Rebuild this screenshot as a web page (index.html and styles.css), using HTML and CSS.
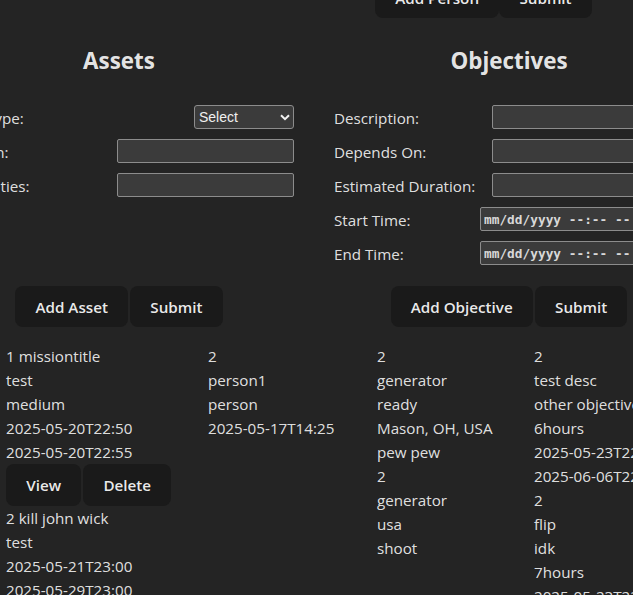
FILE: index.html
```html
<!DOCTYPE html>
<html lang="en">
<head>
<meta charset="utf-8">
<title>Mission Planner</title>
<link rel="stylesheet" href="styles.css">
</head>
<body>
<div class="page">
  <div class="top-actions">
    <button class="btn">Add Person</button><button class="btn">Submit</button>
  </div>

  <div class="forms">
    <section class="card">
      <h2 class="card-title">Assets</h2>
      <div class="fields">
        <div class="field">
          <label class="field-label">Asset Type:</label>
          <span class="select-wrap">
            <select class="select"><option>Select</option></select>
            <svg class="chevron" width="10" height="7" viewBox="0 0 10 7"><path d="M1 1.2 L5 5.2 L9 1.2" fill="none" stroke="#f2f2f2" stroke-width="2"/></svg>
          </span>
        </div>
        <div class="field">
          <label class="field-label">Location:</label>
          <input class="input input-asset" type="text">
        </div>
        <div class="field">
          <label class="field-label">Capabilities:</label>
          <input class="input input-asset" type="text">
        </div>
      </div>
      <div class="actions">
        <button class="btn">Add Asset</button><button class="btn">Submit</button>
      </div>
    </section>

    <section class="card">
      <h2 class="card-title">Objectives</h2>
      <div class="fields">
        <div class="field">
          <label class="field-label">Description:</label>
          <input class="input input-objective" type="text">
        </div>
        <div class="field">
          <label class="field-label">Depends On:</label>
          <input class="input input-objective" type="text">
        </div>
        <div class="field">
          <label class="field-label">Estimated Duration:</label>
          <input class="input input-objective" type="text">
        </div>
        <div class="field">
          <label class="field-label">Start Time:</label>
          <input class="input input-datetime" type="text" value="mm/dd/yyyy --:-- --" readonly>
        </div>
        <div class="field">
          <label class="field-label">End Time:</label>
          <input class="input input-datetime" type="text" value="mm/dd/yyyy --:-- --" readonly>
        </div>
      </div>
      <div class="actions">
        <button class="btn">Add Objective</button><button class="btn">Submit</button>
      </div>
    </section>
  </div>

  <div class="lists">
    <div class="list">
      <div class="item">
        <p>1 missiontitle</p>
        <p>test</p>
        <p>medium</p>
        <p>2025-05-20T22:50</p>
        <p>2025-05-20T22:55</p>
        <div class="item-actions"><button class="btn">View</button><button class="btn">Delete</button></div>
      </div>
      <div class="item">
        <p>2 kill john wick</p>
        <p>test</p>
        <p>2025-05-21T23:00</p>
        <p>2025-05-29T23:00</p>
      </div>
    </div>
    <div class="list">
      <div class="item">
        <p>2</p>
        <p>person1</p>
        <p>person</p>
        <p>2025-05-17T14:25</p>
      </div>
    </div>
    <div class="list">
      <div class="item">
        <p>2</p>
        <p>generator</p>
        <p>ready</p>
        <p>Mason, OH, USA</p>
        <p>pew pew</p>
      </div>
      <div class="item">
        <p>2</p>
        <p>generator</p>
        <p>usa</p>
        <p>shoot</p>
      </div>
    </div>
    <div class="list">
      <div class="item">
        <p>2</p>
        <p>test desc</p>
        <p>other objective</p>
        <p>6hours</p>
        <p>2025-05-23T22:00</p>
        <p>2025-06-06T22:00</p>
      </div>
      <div class="item">
        <p>2</p>
        <p>flip</p>
        <p>idk</p>
        <p>7hours</p>
        <p>2025-05-23T22:00</p>
      </div>
    </div>
  </div>
</div>
</body>
</html>
```
FILE: styles.css
```css
html, body {
  margin: 0;
  padding: 0;
  overflow: hidden;
  background: #242424;
}

body {
  font-family: "Open Sans", "Noto Sans", sans-serif;
  font-size: 15.2px;
  line-height: 24px;
  color: rgba(255, 255, 255, 0.87);
}

.page {
  margin-top: -23px;
  margin-left: -56px;
  width: 1000px;
}

.btn {
  font-family: inherit;
  font-size: 15.2px;
  font-weight: 600;
  line-height: 20px;
  color: rgba(255, 255, 255, 0.92);
  background: #1a1a1a;
  border: 1px solid transparent;
  border-radius: 8px;
  padding: 9.6px 19.2px;
  margin: 0;
  cursor: pointer;
}

.top-actions {
  display: flex;
  gap: 0;
  padding-left: 431px;
}

.forms {
  display: grid;
  grid-template-columns: 350px 350px;
  column-gap: 40px;
  margin-top: 25px;
}

.card {
  display: flex;
  flex-direction: column;
}

.card-title {
  margin: 0 0 26px;
  font-size: 22.4px;
  line-height: 36px;
  font-weight: 700;
  text-align: center;
  color: rgba(255, 255, 255, 0.9);
}

.fields {
  display: flex;
  flex-direction: column;
  gap: 10px;
}

.field {
  display: flex;
  justify-content: space-between;
  align-items: center;
  height: 24px;
}

.field-label {
  padding-top: 1px;
}

.input {
  box-sizing: border-box;
  height: 24px;
  margin: 0;
  padding: 2px 3px;
  background: #3b3b3b;
  border: 1px solid #8c8c8c;
  border-radius: 2px;
  color: #e6e6e6;
  font-family: "Liberation Sans", Arial, sans-serif;
  font-size: 13.33px;
  outline: none;
}

.input-asset { width: 177px; }
.input-objective { width: 200px; margin-right: -8px; }
.input-datetime {
  width: 212px;
  margin-right: -8px;
  font-family: "DejaVu Sans Mono", "Liberation Mono", monospace;
  font-size: 12.8px;
  font-weight: 700;
  color: #d8d8d8;
}

.select-wrap {
  position: relative;
  display: inline-flex;
}

.select {
  appearance: none;
  -webkit-appearance: none;
  box-sizing: border-box;
  width: 100px;
  height: 24px;
  margin: 0;
  padding: 0 4px;
  background: #3b3b3b;
  border: 1px solid #8c8c8c;
  border-radius: 3px;
  color: #f0f0f0;
  font-family: "Liberation Sans", Arial, sans-serif;
  font-size: 14px;
}

.chevron {
  position: absolute;
  right: 4px;
  top: 9px;
  pointer-events: none;
}

.actions {
  display: flex;
  justify-content: center;
  gap: 2px;
  margin-top: auto;
  padding-top: 21px;
}

.lists {
  display: grid;
  grid-template-columns: 202px 169px 157px 1fr;
  margin-top: 17px;
  padding-left: 62px;
  align-items: start;
}

.item p {
  margin: 0;
  white-space: nowrap;
}

.item-actions {
  display: flex;
  gap: 2px;
}
```
